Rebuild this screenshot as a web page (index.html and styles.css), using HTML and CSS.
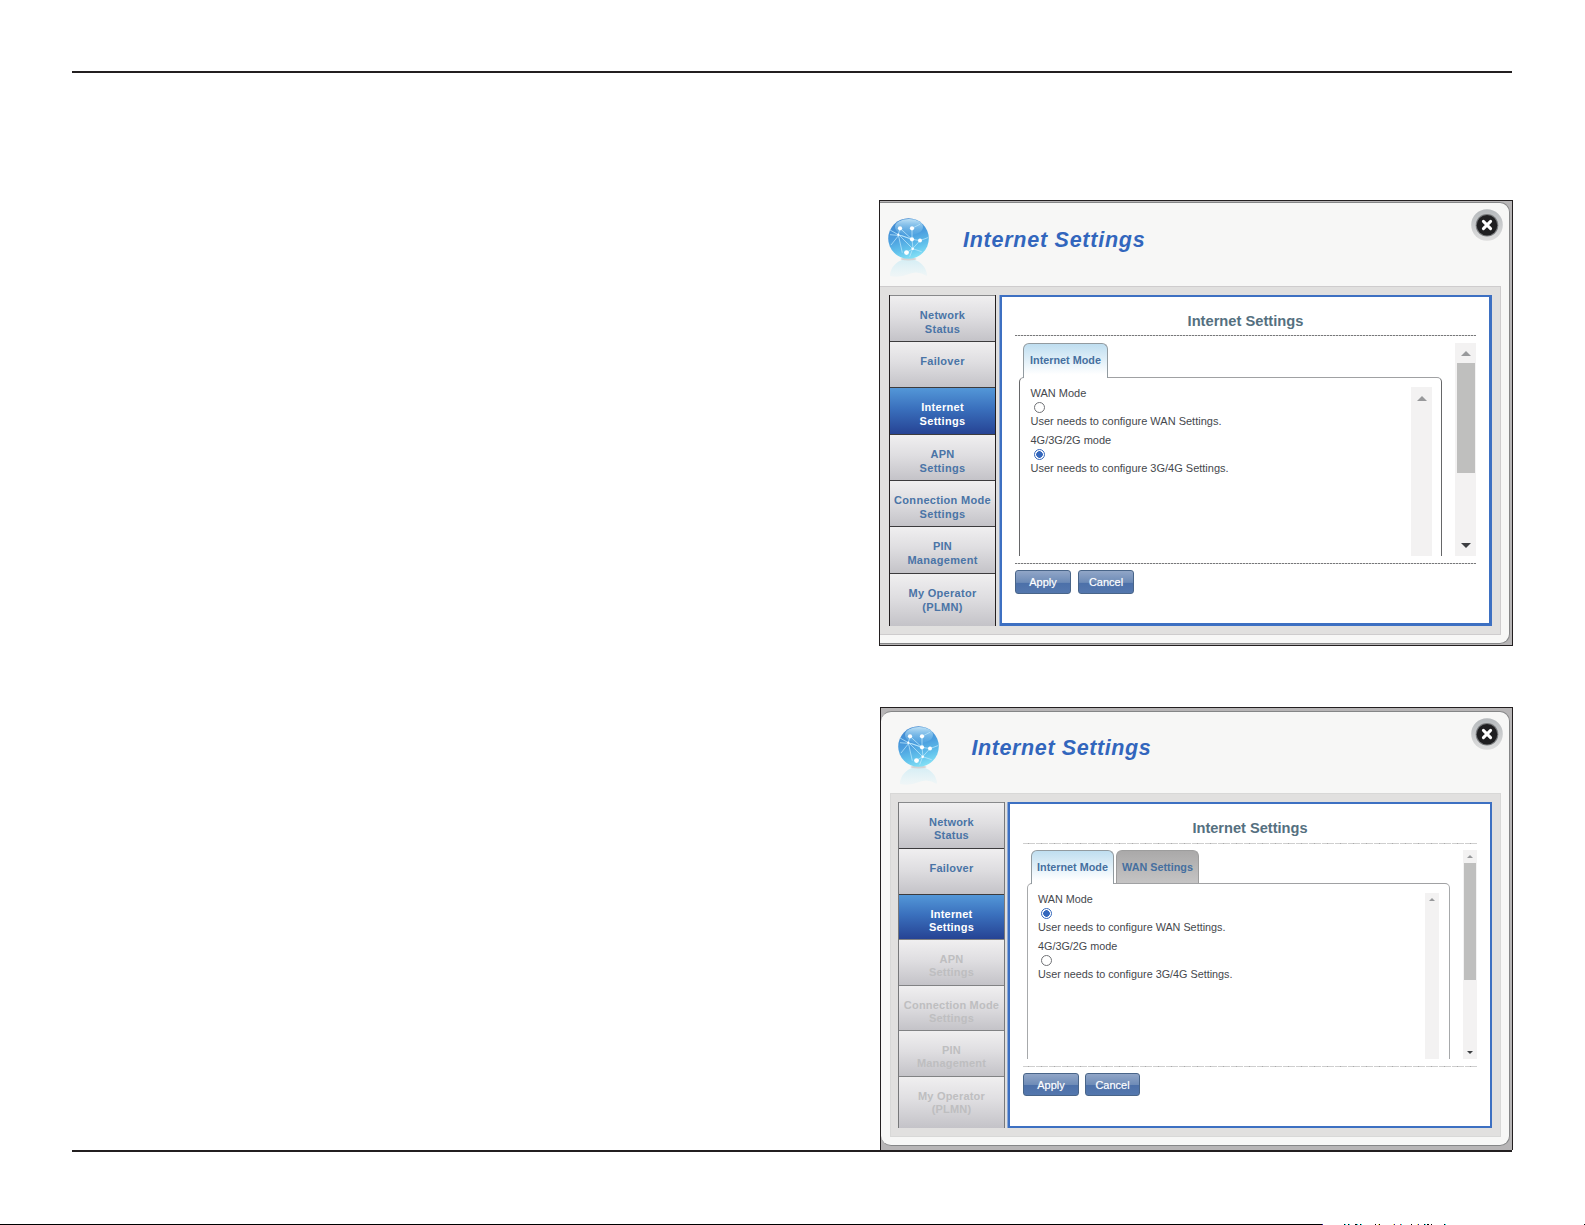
FILE: index.html
```html
<!DOCTYPE html>
<html lang="en">
<head>
<meta charset="utf-8">
<title>Internet Settings</title>
<link rel="stylesheet" href="styles.css">
</head>
<body>
<svg class="defs" width="0" height="0">
  <defs>
    <linearGradient id="ball" x1=".3" y1="0" x2=".6" y2="1">
      <stop offset="0" stop-color="#3f86cf"/><stop offset=".45" stop-color="#4c9fdf"/><stop offset=".75" stop-color="#62c2ec"/><stop offset="1" stop-color="#86e2f6"/>
    </linearGradient>
    <linearGradient id="gloss" x1="0" y1="0" x2="0" y2="1">
      <stop offset="0" stop-color="#d5f1fd" stop-opacity=".85"/><stop offset="1" stop-color="#79c5ef" stop-opacity=".15"/>
    </linearGradient>
    <linearGradient id="mirror" x1="0" y1="0" x2="0" y2="1">
      <stop offset="0" stop-color="#c4e9f4" stop-opacity=".7"/><stop offset="1" stop-color="#d9f1f8" stop-opacity=".25"/>
    </linearGradient>
    <linearGradient id="ring" x1="0" y1="0" x2="0" y2="1">
      <stop offset="0" stop-color="#b5b9bc"/><stop offset="1" stop-color="#dedede"/>
    </linearGradient>
    <symbol id="globe" viewBox="0 0 41 60">
      <path d="M2 58a18.500 17 0 0 1 37 0q-9-6-18-2t-19 2z" fill="url(#mirror)"/>
      <ellipse cx="20.500" cy="41" rx="8" ry="1.500" fill="#d3d3d5"/>
      <circle cx="20.500" cy="20.500" r="20.300" fill="url(#ball)"/>
      <ellipse cx="21" cy="9" rx="14" ry="8" fill="url(#gloss)"/>
      <path d="M2 12l8.300 4.700 13.700 4.600 8 1.300 8-3M12 10.300l-1.700 6.400M24 10.300v11M24 21.300l-10-3.600-12-1M10.300 16.700l4 18M11 17l-8 10M12 10.300l12 11 1 9.400M32 22.600l-7.300 8-6.200 4M24.700 30.700l9 3M24.700 30.700l-3 8M24 10.300l8-4M24.700 30.700l-14-14" fill="none" stroke="#bfe9fc" stroke-width=".9" opacity=".8"/>
      <g fill="#fff"><circle cx="12" cy="10.300" r="2.100"/><circle cx="24" cy="10.300" r="2.100"/><circle cx="24" cy="21.300" r="2.100"/><circle cx="32" cy="22.600" r="2"/><circle cx="18.500" cy="34.600" r="2.400"/><circle cx="24.700" cy="30.700" r="1.300"/><circle cx="10.300" cy="16.700" r="1.100"/></g>
    </symbol>
    <symbol id="close" viewBox="0 0 32 32">
      <circle cx="16" cy="16" r="15.800" fill="url(#ring)"/>
      <circle cx="16" cy="16.300" r="11.300" fill="#77797b"/>
      <circle cx="16" cy="16.300" r="10.300" fill="#1f1f21"/>
      <path d="M12.400 12.400l7.200 7.200M19.600 12.400l-7.200 7.200" stroke="#fff" stroke-width="3" stroke-linecap="round"/>
    </symbol>
  </defs>
</svg>

<main class="page">
  <hr class="rule">

  <section class="frame frame-first">
    <div class="window">
      <header class="header">
        <svg class="globe"><use href="#globe"/></svg>
        <h1 class="title">Internet Settings</h1>
        <svg class="close"><use href="#close"/></svg>
      </header>
      <div class="workspace">
        <nav class="menu">
          <a class="item">Network<br>Status</a>
          <a class="item">Failover</a>
          <a class="item active">Internet<br>Settings</a>
          <a class="item">APN<br>Settings</a>
          <a class="item">Connection Mode<br>Settings</a>
          <a class="item">PIN<br>Management</a>
          <a class="item">My Operator<br>(PLMN)</a>
        </nav>
        <div class="content">
          <h2 class="heading">Internet Settings</h2>
          <div class="divider"></div>
          <div class="viewport">
            <div class="pane">
              <div class="tabs"><span class="tab">Internet Mode</span></div>
              <div class="box">
                <div class="options">
                  <div class="option"><div>WAN Mode</div><div class="radio-row"><span class="radio"></span></div><div>User needs to configure WAN Settings.</div></div>
                  <div class="option"><div>4G/3G/2G mode</div><div class="radio-row"><span class="radio checked"></span></div><div>User needs to configure 3G/4G Settings.</div></div>
                </div>
                <div class="scrollbar inner"><i class="arrow up"></i></div>
              </div>
            </div>
            <div class="scrollbar outer"><i class="arrow up"></i><i class="thumb"></i><i class="arrow down"></i></div>
          </div>
          <div class="divider"></div>
          <div class="actions"><span class="button">Apply</span><span class="button">Cancel</span></div>
        </div>
      </div>
    </div>
  </section>

  <section class="frame frame-second">
    <div class="window">
      <header class="header">
        <svg class="globe"><use href="#globe"/></svg>
        <h1 class="title">Internet Settings</h1>
        <svg class="close"><use href="#close"/></svg>
      </header>
      <div class="workspace">
        <nav class="menu">
          <a class="item">Network<br>Status</a>
          <a class="item">Failover</a>
          <a class="item active">Internet<br>Settings</a>
          <a class="item disabled">APN<br>Settings</a>
          <a class="item disabled">Connection Mode<br>Settings</a>
          <a class="item disabled">PIN<br>Management</a>
          <a class="item disabled">My Operator<br>(PLMN)</a>
        </nav>
        <div class="content">
          <h2 class="heading">Internet Settings</h2>
          <div class="divider"></div>
          <div class="viewport">
            <div class="pane">
              <div class="tabs"><span class="tab">Internet Mode</span><span class="tab inactive">WAN Settings</span></div>
              <div class="box">
                <div class="options">
                  <div class="option"><div>WAN Mode</div><div class="radio-row"><span class="radio checked"></span></div><div>User needs to configure WAN Settings.</div></div>
                  <div class="option"><div>4G/3G/2G mode</div><div class="radio-row"><span class="radio"></span></div><div>User needs to configure 3G/4G Settings.</div></div>
                </div>
                <div class="scrollbar inner"><i class="arrow up"></i></div>
              </div>
            </div>
            <div class="scrollbar outer"><i class="arrow up"></i><i class="thumb"></i><i class="arrow down"></i></div>
          </div>
          <div class="divider"></div>
          <div class="actions"><span class="button">Apply</span><span class="button">Cancel</span></div>
        </div>
      </div>
    </div>
  </section>

  <hr class="rule">
  <svg class="footer-edge" width="1585" height="1" shape-rendering="crispEdges">
    <path d="M0 .5H1322M1344 .5h1M1348 .5h1M1355 .5h2M1360 .5h1M1375 .5h1M1379 .5h1M1411 .5h1M1424 .5h1M1427 .5h2M1431 .5h1M1444 .5h1M1584 .5h1" stroke="#000"/>
    <path d="M1322 .5h1M1394 .5h1M1418 .5h1" stroke="#2a1ea0"/>
    <path d="M1345 .5h1M1349 .5h1M1357 .5h1M1361 .5h1M1401 .5h1M1425 .5h1M1445 .5h1" stroke="#00e5ee"/>
    <path d="M1378 .5h1M1393 .5h1M1417 .5h1" stroke="#f5ee4a"/>
    <path d="M1400 .5h1" stroke="#d0202a"/>
  </svg>
</main>
</body>
</html>
```

FILE: styles.css
```css
* { box-sizing: border-box; }

body {
  margin: 0;
  background: #fff;
  font-family: "Liberation Sans", Arial, sans-serif;
}

.defs { position: absolute; }

.page {
  display: flex;
  flex-direction: column;
  width: 1585px;
  height: 1225px;
  padding-top: 71px;
  overflow: hidden;
}

.rule {
  flex: none;
  width: 1440px;
  height: 2px;
  margin: 0 0 0 72px;
  border: 0;
  background: #231f20;
}

.footer-edge { display: block; margin-top: auto; flex: none; }

/* Frames */
.frame {
  flex: none;
  display: flex;
  border: 1px solid #231f20;
  background: #b7b5b6;
}

.frame-first {
  --header-h: 83px;
  --title-x: 34px;
  --title-space: .75px;
  --work-h: 349px;
  --rows: 46px 46px 47px 46px 46px 47px 1fr;
  --item-space: .3px;
  --item-pad: 13.300px;
  --menu-edge: #231f20;
  --text: 11px;
  --text-x: 10.500px;
  --tab-w: 85px;
  --tab-h: 35px;
  --view-h: 213px;
  --outer-w: 21px;
  --inner-w: 21px;
  --inner-gap: 9px;
  --button-h: 24px;
  --arrow: 5px;
  --thumb-h: 110px;
  --thumb-inset: 2px;
  --box-edge: #666769;
  width: 634px;
  height: 446px;
  margin: 127px 0 0 879px;
}

.frame-second {
  --header-h: 81px;
  --title-x: 33px;
  --title-space: .6px;
  --work-h: 344px;
  --rows: 46px 46px 45px 46px 45px 46px 1fr;
  --item-space: .2px;
  --item-pad: 12.600px;
  --menu-edge: #77787a;
  --text: 10.800px;
  --text-x: 10px;
  --tab-w: 83px;
  --tab-h: 34px;
  --view-h: 209px;
  --outer-w: 14px;
  --inner-w: 14px;
  --inner-gap: 10px;
  --button-h: 23px;
  --arrow: 3px;
  --thumb-h: 117px;
  --thumb-inset: 1px;
  --box-edge: #a7a9ab;
  width: 633px;
  height: 443px;
  margin: 61px 0 0 880px;
  border-bottom: 0;
}

.window {
  width: 630px;
  height: 442px;
  margin-top: 1px;
  border: 1px solid #858687;
  border-left: 0;
  border-radius: 0 10px 10px 0;
  background: #f7f7f6;
}

.frame-second .window {
  width: 629px;
  height: 435px;
  margin-top: 3px;
  border-radius: 10px;
}

/* Header */
.header {
  display: flex;
  align-items: flex-start;
  height: var(--header-h);
  padding: 15px 6px 0 8px;
}
.globe { width: 41px; height: 60px; }
.title {
  margin: 0 0 0 var(--title-x);
  padding-top: 10px;
  color: #3266bd;
  font-size: 21.500px;
  font-style: italic;
  line-height: 24px;
  letter-spacing: var(--title-space);
}
.close { width: 32px; height: 32px; margin: -9px 0 0 auto; }
.frame-second .header { padding: 14px 6px 0 16.500px; }
.frame-second .close { margin-top: -8px; }

/* Workspace */
.workspace {
  display: flex;
  gap: 3px;
  width: 621px;
  height: var(--work-h);
  padding: 8px 8px 8px 9px;
  border: 1px solid #cecccd;
  border-left: 0;
  background: #e1e0df;
}
.frame-second .workspace {
  gap: 2px;
  width: 611px;
  margin-left: 9px;
  padding: 8px 8px 8px 7px;
  border: 1px solid #d8d8d7;
}

.menu {
  flex: none;
  display: grid;
  grid-template-rows: var(--rows);
  width: 107px;
  border: solid var(--menu-edge);
  border-width: 0 1px;
}
.item {
  padding-top: var(--item-pad);
  border-top: 1px solid #3c3b3d;
  background: linear-gradient(#f0eff0, #dfdee1 45%, #c4c3c8);
  color: #4a74a6;
  font-size: 11px;
  font-weight: bold;
  line-height: 13.300px;
  letter-spacing: var(--item-space);
  text-align: center;
  white-space: nowrap;
}
.item:first-child { border-top-color: #88898b; }
.active {
  background: linear-gradient(#5397d8, #3a70bd 45%, #264394);
  color: #fff;
}
.disabled { border-top-color: #818284; color: #bebec0; }

.content {
  flex: 1;
  padding: 0 13px;
  border: solid #3d70c2;
  border-width: 2px 3px 3px 2px;
  background: #fff;
  margin-left: 1px;
  box-shadow: -1px 0 #8ca8d6;
}
.frame-second .content { border-width: 2px; }

.heading {
  height: 38px;
  margin: 0;
  padding-top: 15px;
  color: #55707f;
  font-size: 14.700px;
  line-height: 18px;
  text-align: center;
}
.frame-second .heading { height: 39px; font-size: 14.600px; }

.divider {
  height: 1px;
  background: repeating-linear-gradient(90deg, #77787a 0 2px, #d5d5d5 2px 3px);
}
.frame-second .divider {
  background: repeating-linear-gradient(90deg, #cfcfcf 0 5px, #aaa 5px 6px, #cfcfcf 6px 12px, #fff 12px 13px);
}

.viewport {
  display: flex;
  height: var(--view-h);
  margin: 7px 0;
}
.frame-second .viewport { margin: 6px 0 7px; }

.pane {
  flex: 1;
  padding: 0 13px 0 4px;
}
.tabs {
  display: flex;
  gap: 2px;
  height: var(--tab-h);
  margin: 0 0 -1px 4px;
}
.tab {
  position: relative;
  width: var(--tab-w);
  border: 1px solid #929ba0;
  border-bottom: 0;
  border-radius: 6px 6px 0 0;
  background: linear-gradient(#bfdef0, #fff 90%);
  color: #456f9f;
  font-size: 10.800px;
  font-weight: bold;
  line-height: 32px;
  text-align: center;
  white-space: nowrap;
}
.inactive {
  height: calc(var(--tab-h) - 1px);
  border-color: #9d9d9d;
  background: linear-gradient(#aaa9a9, #c5c4c4);
}

.box {
  display: flex;
  justify-content: space-between;
  height: calc(var(--view-h) - var(--tab-h) + 1px);
  padding: 9px var(--inner-gap) 0 var(--text-x);
  border: 1px solid var(--box-edge);
  border-top-color: #a0a1a3;
  border-bottom: 0;
  border-radius: 5px 5px 0 0;
}
.options {
  color: #45484d;
  font-size: var(--text);
  line-height: 13px;
  white-space: nowrap;
}
.option { margin-bottom: 6px; }
.radio-row {
  display: flex;
  align-items: center;
  height: 15px;
  padding-left: 3px;
}
.radio {
  width: 11px;
  height: 11px;
  border: 1px solid #707276;
  border-radius: 50%;
}
.checked {
  border-color: #3568bd;
  background: radial-gradient(circle, #3568bd 0 3px, #fff 3.600px);
}

/* Scrollbars */
.scrollbar {
  flex: none;
  display: flex;
  flex-direction: column;
  align-items: center;
  background: #f3f2f2;
}
.inner { width: var(--inner-w); }
.outer { width: var(--outer-w); }
.thumb {
  align-self: stretch;
  height: var(--thumb-h);
  margin: 0 1px 0 var(--thumb-inset);
  background: #bfbfbe;
}
.arrow {
  width: 0;
  height: 0;
  border: solid transparent;
  border-width: 0 var(--arrow);
}
.up {
  margin: 8px 0 7px;
  border-bottom: 5px solid #98999b;
}
.down {
  margin: auto 0 8px;
  border-top: 5px solid #3d3f42;
}
.inner .up { margin-top: 9px; }
.frame-second .up { margin: 5px 0; border-bottom-width: 3px; }
.frame-second .down { margin: auto 0 5px; border-top-width: 3px; }

/* Buttons */
.actions {
  display: flex;
  gap: 7px;
  margin-top: 6px;
}
.button {
  width: 56px;
  height: var(--button-h);
  border: 1px solid #496589;
  border-radius: 3px;
  background: linear-gradient(#91a6c7, #6d8bb7 52%, #4c70a9 54%, #5477ae);
  color: #fff;
  font-size: 11px;
  line-height: 23px;
  text-align: center;
  text-shadow: 0 0 1px #ffffff80;
}
.frame-second .actions { gap: 6px; }
.frame-second .button + .button { width: 55px; }
```
